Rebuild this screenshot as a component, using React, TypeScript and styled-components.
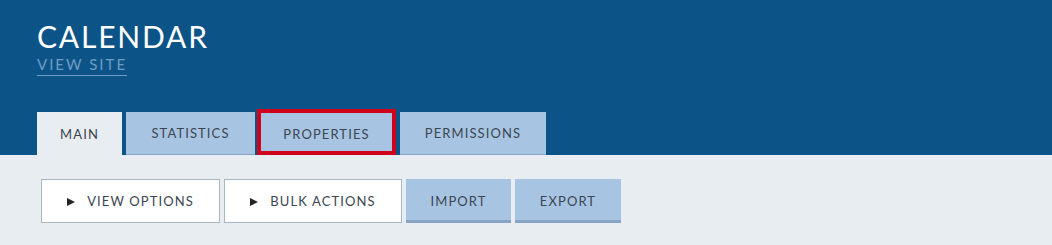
import styled, { createGlobalStyle } from 'styled-components';

const GlobalStyle = createGlobalStyle`
  body {
    margin: 0;
    background: #e8edf1;
    font-family: Lato, "Open Sans", sans-serif;
  }
`;

const Header = styled.header`
  background-color: #0c5487;
  padding: 19px 37px 0;
  display: flex;
  flex-direction: column;
  align-items: flex-start;
`;

const Title = styled.h1`
  margin: 0;
  font-size: 30px;
  font-weight: 400;
  line-height: 34px;
  letter-spacing: 1.8px;
  color: #ffffff;
`;

const ViewSite = styled.a`
  margin-top: 3px;
  font-size: 15px;
  line-height: 17px;
  letter-spacing: 2px;
  color: #6f9cc5;
  text-decoration: none;
  border-bottom: 1px solid #6f9cc5;
  padding-bottom: 2px;
`;

const Tabs = styled.nav`
  display: flex;
  align-items: flex-end;
  gap: 4px;
  margin-top: 33px;
`;

const Tab = styled.div<{ $active?: boolean; $width: number; $focused?: boolean }>`
  box-sizing: border-box;
  width: ${(p) => p.$width}px;
  height: ${(p) => (p.$focused ? 46 : 43)}px;
  display: flex;
  align-items: center;
  justify-content: center;
  font-size: 13px;
  letter-spacing: 1.1px;
  color: #3c4550;
  background-color: ${(p) => (p.$active ? '#e8edf1' : '#a7c5e3')};
  border-bottom: ${(p) => (p.$active ? 'none' : '1px solid #87a4c2')};
  ${(p) =>
    p.$focused &&
    `
    border: 4px solid #d0021b;
    margin-left: -2px;
    padding-top: 3px;
  `}
`;

const Content = styled.main`
  padding: 24px 41px;
  display: flex;
  gap: 4px;
`;

const Button = styled.button<{ $variant: 'white' | 'blue'; $width: number }>`
  box-sizing: border-box;
  width: ${(p) => p.$width}px;
  height: 44px;
  display: flex;
  align-items: center;
  justify-content: center;
  gap: 12px;
  font-family: inherit;
  font-size: 13px;
  letter-spacing: 1.1px;
  color: #3c4550;
  cursor: pointer;
  background-color: ${(p) => (p.$variant === 'white' ? '#ffffff' : '#a7c5e3')};
  border: ${(p) => (p.$variant === 'white' ? '1px solid #a9b6c4' : 'none')};
  border-bottom: ${(p) => (p.$variant === 'white' ? '1px solid #a9b6c4' : '3px solid #87a4c2')};
  padding: ${(p) => (p.$variant === 'white' ? '0' : '3px 0 0')};
`;

const Arrow = styled.span`
  width: 0;
  height: 0;
  border-top: 4.5px solid transparent;
  border-bottom: 4.5px solid transparent;
  border-left: 8px solid #222;
  margin-top: 1px;
`;

export default function App() {
  return (
    <>
      <GlobalStyle />
      <Header>
        <Title>CALENDAR</Title>
        <ViewSite href="#">VIEW SITE</ViewSite>
        <Tabs>
          <Tab $active $width={85}>MAIN</Tab>
          <Tab $width={129}>STATISTICS</Tab>
          <Tab $width={139} $focused>PROPERTIES</Tab>
          <Tab $width={146}>PERMISSIONS</Tab>
        </Tabs>
      </Header>
      <Content>
        <Button $variant="white" $width={179}><Arrow />VIEW OPTIONS</Button>
        <Button $variant="white" $width={178}><Arrow />BULK ACTIONS</Button>
        <Button $variant="blue" $width={105}>IMPORT</Button>
        <Button $variant="blue" $width={106}>EXPORT</Button>
      </Content>
    </>
  );
}
